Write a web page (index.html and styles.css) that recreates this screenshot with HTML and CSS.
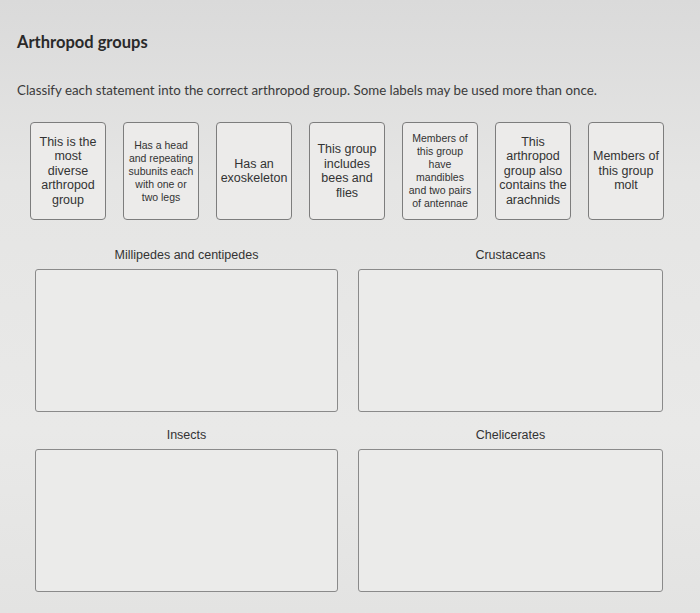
FILE: index.html
```html
<!DOCTYPE html>
<html lang="en">
<head>
<meta charset="utf-8">
<title>Arthropod groups</title>
<link rel="stylesheet" href="styles.css">
</head>
<body>
<main class="question">
  <h1 class="title">Arthropod groups</h1>
  <p class="prompt">Classify each statement into the correct arthropod group. Some labels may be used more than once.</p>

  <div class="bank">
    <div class="chip">This is the most diverse arthropod group</div>
    <div class="chip chip-small">Has a head and repeating subunits each with one or two legs</div>
    <div class="chip">Has an exoskeleton</div>
    <div class="chip">This group includes bees and flies</div>
    <div class="chip chip-small">Members of this group have mandibles and two pairs of antennae</div>
    <div class="chip">This arthropod group also contains the arachnids</div>
    <div class="chip">Members of this group molt</div>
  </div>

  <div class="targets">
    <section class="target">
      <h2 class="target-label">Millipedes and centipedes</h2>
      <div class="dropzone"></div>
    </section>
    <section class="target">
      <h2 class="target-label">Crustaceans</h2>
      <div class="dropzone"></div>
    </section>
    <section class="target">
      <h2 class="target-label">Insects</h2>
      <div class="dropzone"></div>
    </section>
    <section class="target">
      <h2 class="target-label">Chelicerates</h2>
      <div class="dropzone"></div>
    </section>
  </div>
</main>
</body>
</html>
```
FILE: styles.css
```css
html, body {
  margin: 0;
  height: 100%;
}

body {
  background: linear-gradient(180deg, #dadada 0%, #e5e5e4 30%, #e9e9e8 70%, #e3e3e2 100%);
  color: #2f2f2f;
  font-family: "Liberation Sans", Arial, sans-serif;
}

.question {
  padding: 33px 0 0 17px;
}

.title {
  margin: 0;
  font-family: Lato, "Open Sans", sans-serif;
  font-weight: 700;
  font-size: 16.5px;
  line-height: 18px;
  color: #2a2a2a;
}

.prompt {
  margin: 31px 0 0;
  font-family: Lato, "Open Sans", sans-serif;
  font-size: 13.3px;
  line-height: 16px;
  color: #3a3a3a;
}

.bank {
  display: flex;
  gap: 17px;
  margin: 24px 0 0 13px;
}

.chip {
  box-sizing: border-box;
  width: 76px;
  height: 98px;
  padding: 0 3px;
  display: flex;
  align-items: center;
  justify-content: center;
  text-align: center;
  font-size: 12.5px;
  line-height: 14.5px;
  color: #333;
  background: #ecebea;
  border: 1px solid #7d7d7d;
  border-radius: 4px;
}

.chip-small {
  font-size: 10.5px;
  line-height: 13px;
}

.targets {
  display: grid;
  grid-template-columns: 303px 305px;
  column-gap: 20px;
  row-gap: 16px;
  margin: 28px 0 0 18px;
}

.target-label {
  margin: 0 0 6px;
  text-align: center;
  font-weight: 400;
  font-size: 12.5px;
  line-height: 15px;
  color: #333;
}

.dropzone {
  height: 141px;
  background: #ebebea;
  border: 1px solid #8a8a8a;
  border-radius: 3px;
}
```
